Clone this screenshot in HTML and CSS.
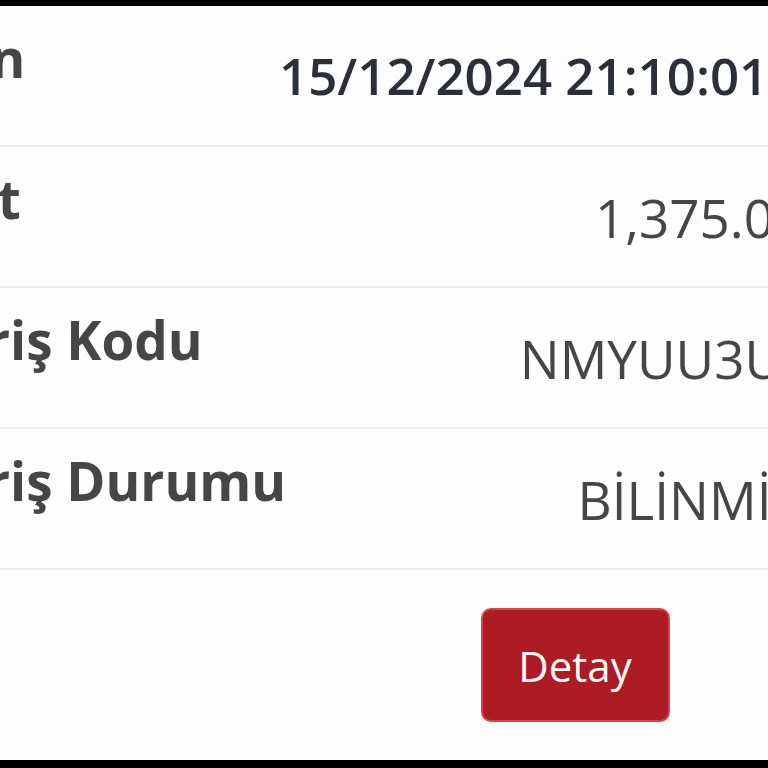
FILE: index.html
```html
<!DOCTYPE html>
<html lang="tr">
<head>
    <meta charset="UTF-8">
    <meta name="viewport" content="width=device-width, initial-scale=1.0">
    <title>Sipariş Detayı</title>
    <link rel="stylesheet" href="styles.css">
</head>
<body>
    <div class="page">
        <div class="sheet">
            <div class="row head">
                <div class="label">Kalan</div>
                <div class="value">15/12/2024 21:10:01</div>
            </div>
            <div class="row">
                <div class="label">Ücret</div>
                <div class="value">1,375.00 TL</div>
            </div>
            <div class="row">
                <div class="label">Sipariş Kodu</div>
                <div class="value">NMYUU3UK7S</div>
            </div>
            <div class="row">
                <div class="label">Sipariş Durumu</div>
                <div class="value">BİLİNMİYOR</div>
            </div>
            <div class="row actions">
                <div class="label"></div>
                <div class="value">
                    <button class="detail-btn">Detay</button>
                </div>
            </div>
        </div>
    </div>
</body>
</html>
```

FILE: styles.css
```css
:root {
    --text-color: #464646;
    --head-color: #2b3038;
    --border-color: #ececec;
    --primary-color: #ad1c24;
    --primary-border: #d9434b;
}

html,
body {
    overflow: hidden;
}

body {
    margin: 0;
    padding: 6px 0 8px;
    height: 768px;
    box-sizing: border-box;
    background: #000;
    font-family: 'Open Sans', 'Noto Sans', sans-serif;
    color: var(--text-color);
}

.page {
    height: 754px;
    background: #fdfdfd;
    overflow: hidden;
}

.sheet {
    margin-left: -125px;
    width: 1012px;
}

.row {
    display: grid;
    grid-template-columns: 404px 1fr;
    align-items: start;
    height: 139px;
    border-bottom: 2px solid var(--border-color);
}

.label {
    padding-top: 16px;
    font-size: 53px;
    line-height: 72px;
    font-weight: 700;
    white-space: nowrap;
}

.value {
    padding: 35px 12px 0 0;
    font-size: 53px;
    line-height: 72px;
    text-align: right;
    white-space: nowrap;
}

.head .value {
    padding-top: 33px;
    padding-right: 122px;
    font-size: 51px;
    font-weight: 600;
    color: var(--head-color);
}

.actions {
    height: auto;
    border-bottom: none;
}

.actions .value {
    padding-top: 38px;
    padding-right: 16px;
    display: flex;
    justify-content: center;
}

.detail-btn {
    width: 189px;
    height: 114px;
    background-color: var(--primary-color);
    border: 2px solid var(--primary-border);
    border-radius: 10px;
    color: #fffaf5;
    font-family: inherit;
    font-size: 42px;
    cursor: pointer;
}
```
